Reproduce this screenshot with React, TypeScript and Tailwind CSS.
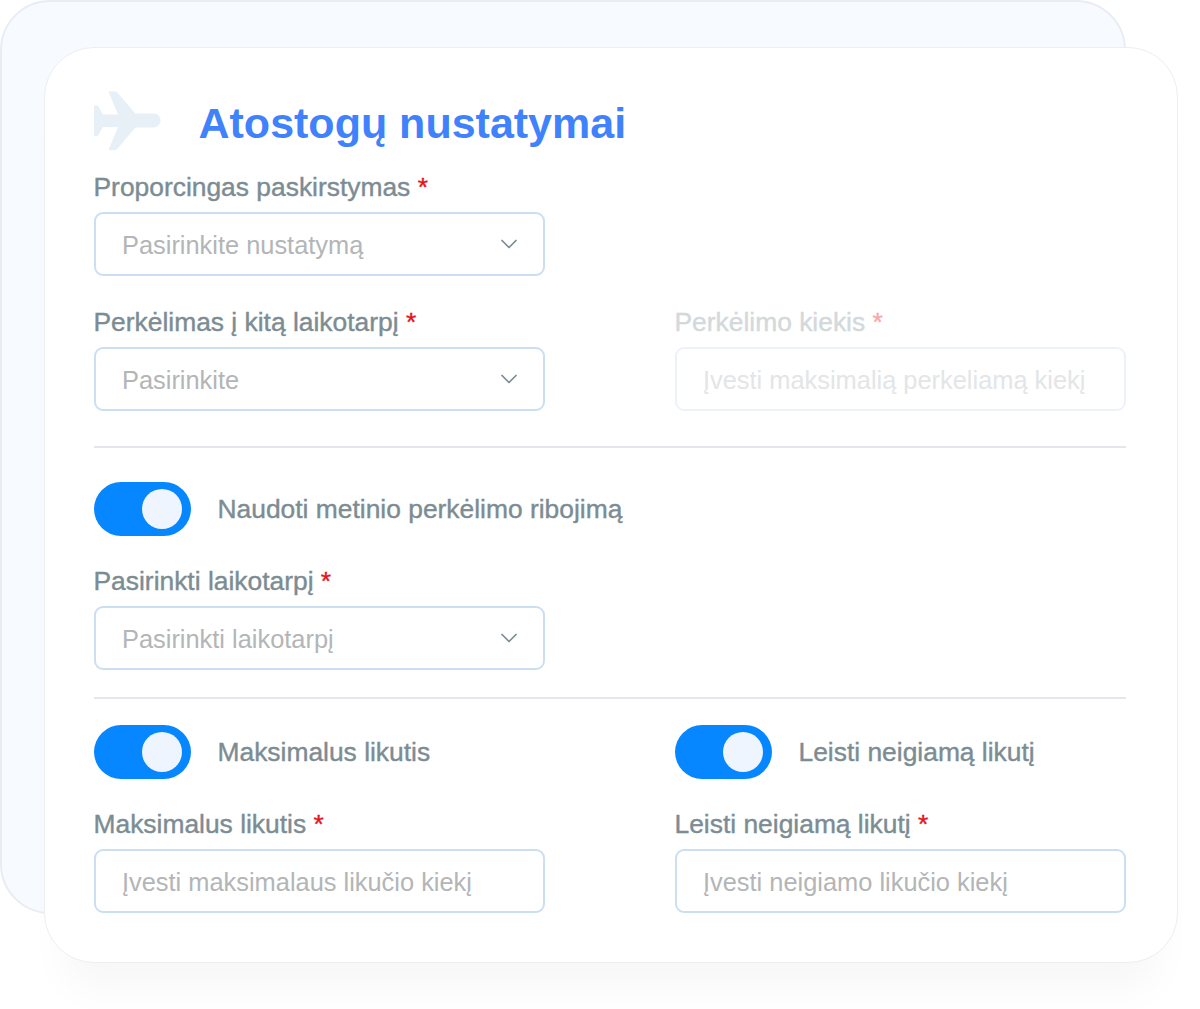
import React from "react";
import { ChevronDown } from "lucide-react";

function Label({ text, faded }: { text: string; faded?: boolean }) {
  return (
    <div
      className={`h-[30px] text-[26.4px] leading-[30px] [-webkit-text-stroke:0.4px_currentColor] ${
        faded ? "text-[#d3d9db]" : "text-[#7c8c93]"
      }`}
    >
      {text}{" "}
      <span className={faded ? "text-[#f9a8a8]" : "text-[#e5131b]"}>*</span>
    </div>
  );
}

function Field({
  label,
  placeholder,
  select,
  faded,
}: {
  label: string;
  placeholder: string;
  select?: boolean;
  faded?: boolean;
}) {
  return (
    <div className="flex flex-col gap-[10px]">
      <Label text={label} faded={faded} />
      <div
        className={`flex h-[64px] items-center justify-between rounded-[9px] border-2 pr-[20px] pl-[26.5px] text-[25.4px] ${
          faded
            ? "border-[#edf2fa] text-[#e3e5e6]"
            : "border-[#cbdff2] text-[#b3b5b6]"
        }`}
      >
        <span className="pt-[3px]">{placeholder}</span>
        {select && (
          <ChevronDown
            className="h-[28px] w-[28px] text-[#7c8c93]"
            strokeWidth={1.5}
          />
        )}
      </div>
    </div>
  );
}

function Toggle({ label }: { label: string }) {
  return (
    <div className="flex h-[54px] items-center gap-[27px]">
      <div className="flex h-[54px] w-[97px] items-center justify-end rounded-full bg-[#0687ff] pr-[9px]">
        <div className="h-[40px] w-[40px] rounded-full bg-[#eff5fe]" />
      </div>
      <span className="pt-[2px] text-[26.4px] text-[#7c8c93] [-webkit-text-stroke:0.4px_currentColor]">
        {label}
      </span>
    </div>
  );
}

function Plane() {
  return (
    <svg width="67" height="60" viewBox="0 0 68 60" className="shrink-0">
      <path
        d="M0 15.5c0-.8.6-1.500 1.400-1.500h1.200c.7 0 1.300.3 1.700 1L9 23.500h15.500L15 1.200C14.800.6 15.200 0 15.900 0h5.300c.9 0 1.700.4 2.300 1.100L42 22.500h18.500C64.600 22.500 67.500 25.900 67.500 29.500S64.600 36.500 60.500 36.500H42L23.500 58.500c-.6.7-1.400 1.100-2.300 1.100h-5.300c-.7 0-1.100-.6-.9-1.200L24.500 36H9l-4.700 8.500c-.4.700-1 1-1.700 1H1.400C.6 45.500 0 44.800 0 44z"
        fill="#e7eff7"
      />
    </svg>
  );
}

export default function App() {
  return (
    <div className="relative h-[1009px] w-[1200px] overflow-hidden bg-white font-['Liberation_Sans',Arial,sans-serif]">
      {/* back card sits behind the form */}
      <div className="absolute top-0 left-0 h-[914px] w-[1126px] rounded-[50px] border-2 border-[#e9edf3] bg-[#f7faff]" />

      <div className="absolute top-[47px] left-[44px] flex h-[916px] w-[1134px] flex-col rounded-[50px] border-[1.5px] border-[#eceef1] bg-white px-[48.5px] pt-[42.5px] shadow-[0_45px_40px_-20px_rgba(0,0,0,0.035)]">
        <div className="flex h-[60px] items-center gap-[38px]">
          <Plane />
          <h1 className="pt-[5px] text-[43px] font-bold text-[#3f82fb]">
            Atostogų nustatymai
          </h1>
        </div>

        <div className="mt-[21px] grid grid-cols-[451px_451px] gap-x-[130px]">
          <Field label="Proporcingas paskirstymas" placeholder="Pasirinkite nustatymą" select />
        </div>

        <div className="mt-[31px] grid grid-cols-[451px_451px] gap-x-[130px]">
          <Field label="Perkėlimas į kitą laikotarpį" placeholder="Pasirinkite" select />
          <Field label="Perkėlimo kiekis" placeholder="Įvesti maksimalią perkeliamą kiekį" faded />
        </div>

        <div className="mt-[35px] h-[2px] w-[1032px] bg-[#e3e6ea]" />

        <div className="mt-[34px]">
          <Toggle label="Naudoti metinio perkėlimo ribojimą" />
        </div>

        <div className="mt-[30px] grid grid-cols-[451px_451px] gap-x-[130px]">
          <Field label="Pasirinkti laikotarpį" placeholder="Pasirinkti laikotarpį" select />
        </div>

        <div className="mt-[27px] h-[2px] w-[1032px] bg-[#e3e6ea]" />

        <div className="mt-[26px] grid grid-cols-[451px_451px] gap-x-[130px]">
          <Toggle label="Maksimalus likutis" />
          <Toggle label="Leisti neigiamą likutį" />
        </div>

        <div className="mt-[30px] grid grid-cols-[451px_451px] gap-x-[130px]">
          <Field label="Maksimalus likutis" placeholder="Įvesti maksimalaus likučio kiekį" />
          <Field label="Leisti neigiamą likutį" placeholder="Įvesti neigiamo likučio kiekį" />
        </div>
      </div>
    </div>
  );
}
